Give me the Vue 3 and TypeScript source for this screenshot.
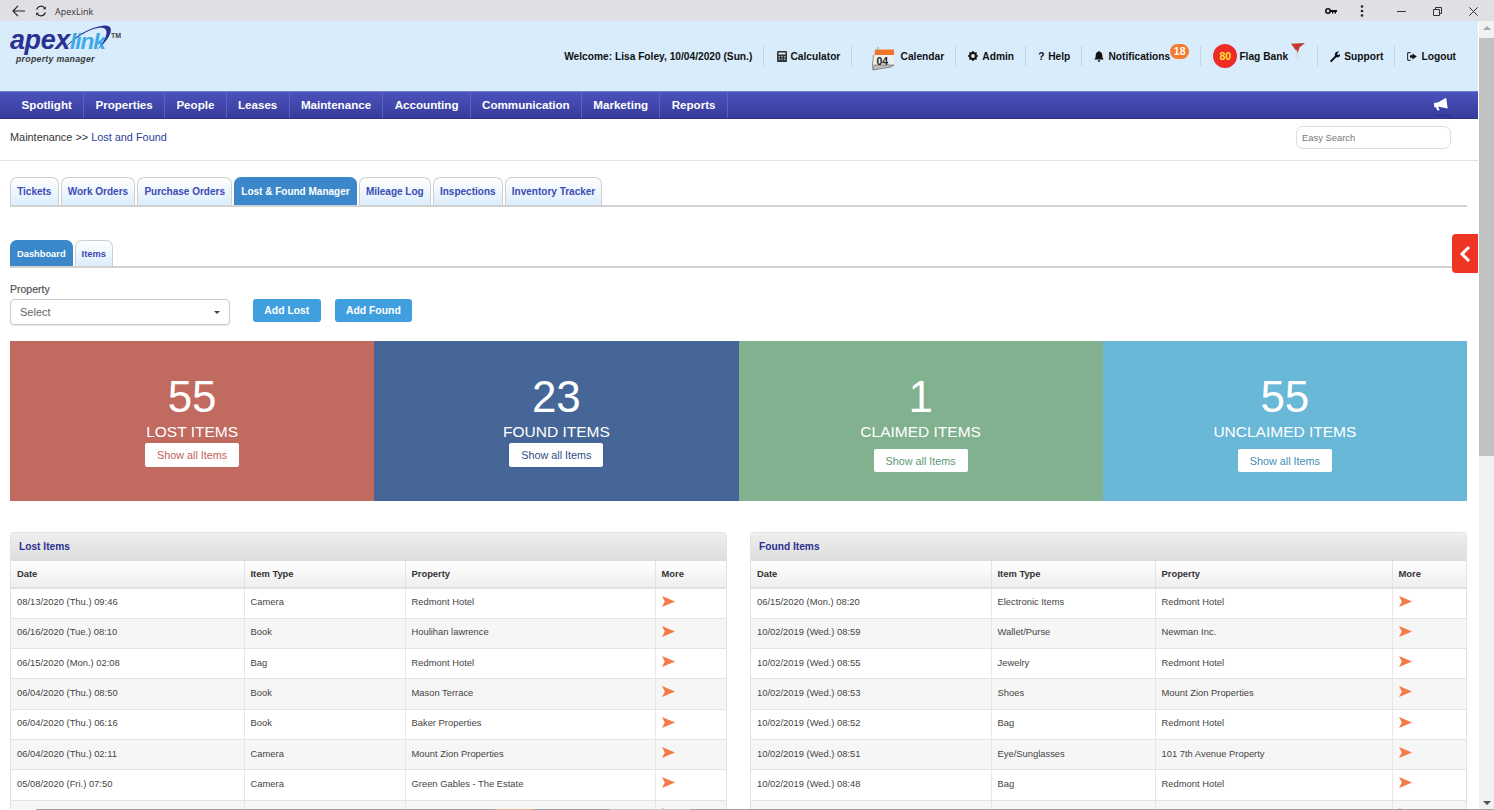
<script setup lang="ts">
interface Row { date: string; type: string; property: string }
const navItems = ['Spotlight', 'Properties', 'People', 'Leases', 'Maintenance', 'Accounting', 'Communication', 'Marketing', 'Reports']
const tabs = ['Tickets', 'Work Orders', 'Purchase Orders', 'Lost & Found Manager', 'Mileage Log', 'Inspections', 'Inventory Tracker']
const stats = [
  { value: '55', label: 'LOST ITEMS', cls: 'lost' },
  { value: '23', label: 'FOUND ITEMS', cls: 'found' },
  { value: '1', label: 'CLAIMED ITEMS', cls: 'claimed' },
  { value: '55', label: 'UNCLAIMED ITEMS', cls: 'unclaimed' },
]
const lostRows: Row[] = [
  { date: '08/13/2020 (Thu.) 09:46', type: 'Camera', property: 'Redmont Hotel' },
  { date: '06/16/2020 (Tue.) 08:10', type: 'Book', property: 'Houlihan lawrence' },
  { date: '06/15/2020 (Mon.) 02:08', type: 'Bag', property: 'Redmont Hotel' },
  { date: '06/04/2020 (Thu.) 08:50', type: 'Book', property: 'Mason Terrace' },
  { date: '06/04/2020 (Thu.) 06:16', type: 'Book', property: 'Baker Properties' },
  { date: '06/04/2020 (Thu.) 02:11', type: 'Camera', property: 'Mount Zion Properties' },
  { date: '05/08/2020 (Fri.) 07:50', type: 'Camera', property: 'Green Gables - The Estate' },
  { date: '', type: '', property: '' },
]
const foundRows: Row[] = [
  { date: '06/15/2020 (Mon.) 08:20', type: 'Electronic Items', property: 'Redmont Hotel' },
  { date: '10/02/2019 (Wed.) 08:59', type: 'Wallet/Purse', property: 'Newman Inc.' },
  { date: '10/02/2019 (Wed.) 08:55', type: 'Jewelry', property: 'Redmont Hotel' },
  { date: '10/02/2019 (Wed.) 08:53', type: 'Shoes', property: 'Mount Zion Properties' },
  { date: '10/02/2019 (Wed.) 08:52', type: 'Bag', property: 'Redmont Hotel' },
  { date: '10/02/2019 (Wed.) 08:51', type: 'Eye/Sunglasses', property: '101 7th Avenue Property' },
  { date: '10/02/2019 (Wed.) 08:48', type: 'Bag', property: 'Redmont Hotel' },
  { date: '', type: '', property: '' },
]
const panels = [
  { title: 'Lost Items', rows: lostRows, cls: 'p-lost' },
  { title: 'Found Items', rows: foundRows, cls: 'p-found' },
]
</script>

<template>
  <div class="window">
    <div class="titlebar">
      <svg class="t-back" width="13" height="12" viewBox="0 0 13 12"><path d="M6 .8 1 6l5 5.200M1 6h12" fill="none" stroke="#222" stroke-width="1.200"/></svg>
      <svg class="t-reload" width="12" height="12" viewBox="0 0 14 14"><path d="M2 5.500A5.200 5.200 0 0 1 11.600 4M12 8.500A5.200 5.200 0 0 1 2.400 10" fill="none" stroke="#222" stroke-width="1.300"/><path d="M12.600 1.600v3.400H9.400zM1.400 12.400V9h3.200z" fill="#222"/></svg>
      <span class="t-title">ApexLink</span>
      <span class="t-spacer"></span>
      <svg class="t-key" width="12" height="8" viewBox="0 0 12 8"><circle cx="3" cy="4" r="2.200" fill="none" stroke="#111" stroke-width="1.600"/><path d="M5 3h7v2h-1v1.400H9.600V5H8.400v1.400H7V5H5z" fill="#111"/></svg>
      <svg class="t-dots" width="4" height="12" viewBox="0 0 4 12"><circle cx="2" cy="1.500" r="1.300" fill="#222"/><circle cx="2" cy="6" r="1.300" fill="#222"/><circle cx="2" cy="10.500" r="1.300" fill="#222"/></svg>
      <svg class="t-min" width="9" height="10" viewBox="0 0 9 10"><path d="M0 5.500h9" stroke="#333"/></svg>
      <svg class="t-max" width="9" height="9" viewBox="0 0 9 9"><path d="M.5 2.500h6v6h-6zM2.500 2.500V.5h6v6H6.500" fill="none" stroke="#333"/></svg>
      <svg class="t-close" width="9" height="9" viewBox="0 0 9 9"><path d="M.3.300l8.400 8.400M8.700.300L.3 8.700" stroke="#333"/></svg>
    </div>

    <div class="viewport">
      <div class="page">
        <header class="header">
          <div class="logo">
            <svg class="swoosh" width="54" height="30" viewBox="0 0 54 30"><path d="M3 26C14 12 30 3 44 1.500c7-.5 8 3.500 6 8.500-2 5-7 11-13 16 5-6 9-12 9.500-17 .5-5-3.500-6-8.500-5C26 6 14 15 3 26z" fill="#28308f"/></svg>
            <span class="l-apex">apex</span><span class="l-link">link</span>
            <span class="l-tm">TM</span>
            <span class="l-sub">property manager</span>
          </div>
          <div class="hitems">
            <div class="hitem"><span>Welcome: Lisa Foley, 10/04/2020 (Sun.)</span></div>
            <div class="hitem">
              <svg width="10" height="11" viewBox="0 0 10 11"><rect width="10" height="11" rx="1" fill="#333"/><rect x="1.500" y="1.500" width="7" height="2" fill="#d8ecfc"/><path d="M1.500 5h1.500v1.200H1.500zM4.200 5h1.500v1.200H4.200zM7 5h1.500v1.200H7zM1.500 7.500h1.500v1.200H1.500zM4.200 7.500h1.500v1.200H4.200zM7 7.500h1.500v1.200H7z" fill="#b8c4cc"/></svg>
              <span>Calculator</span>
            </div>
            <div class="hitem cal">
              <span class="calendar">
                <svg width="23" height="25" viewBox="0 0 23 25"><path d="M3 3.500h19V19H1z" fill="#f4f4f2"/><path d="M3 3.500h19V9H2.400z" fill="#f0742c"/><path d="M2 9h20v11H.8L0 24l2-4z" fill="#eee"/><path d="M0 24 1.500 9M1 24l18-3 3-2H2z" stroke="#777" stroke-width=".8" fill="#bbb"/><path d="M6 1v4" stroke="#999"/></svg>
                <b>04</b>
              </span>
              <span>Calendar</span>
            </div>
            <div class="hitem">
              <svg width="10" height="10" viewBox="0 0 10 10"><circle cx="5" cy="5" r="2.900" fill="none" stroke="#111" stroke-width="2"/><path d="M5 0v10M0 5h10M1.500 1.500l7 7M8.500 1.500l-7 7" stroke="#111" stroke-width="1.500" stroke-dasharray="1.700 6.600 1.700"/></svg>
              <span>Admin</span>
            </div>
            <div class="hitem"><span class="q">?</span><span>Help</span></div>
            <div class="hitem notif">
              <svg width="10" height="11" viewBox="0 0 10 11"><path d="M5 0c.5 0 .8.300.8.800C7.500 1.200 8.300 2.600 8.300 4.500c0 2 .5 3 1.500 4H.2c1-1 1.500-2 1.500-4 0-1.900.8-3.300 2.500-3.700C4.200.3 4.500 0 5 0zM3.700 9.300h2.600C6.200 10.300 5.700 11 5 11s-1.200-.7-1.300-1.700z" fill="#111"/></svg>
              <span>Notifications</span><span class="badge">18</span>
            </div>
            <div class="hitem flag">
              <span class="count">80</span><span>Flag Bank</span>
              <svg class="flagicon" width="15" height="17" viewBox="0 0 15 17"><path d="M0 .8 14 0 8.500 4.500 6.800 10z" fill="#c53a2c"/><path d="M5.500 7 7 16.500" stroke="#d4d4cc" stroke-width="1" fill="none"/></svg>
            </div>
            <div class="hitem">
              <svg width="10" height="11" viewBox="0 0 10 11"><path d="M.4 9.500 5 4.800C4.600 3.300 5 1.900 6.200 1 7.100.4 8.200.2 9.200.6L7.300 2.500l.3 1.300 1.300.3L10.600 2.300c.3 1 0 2.100-.7 3-.9 1-2.300 1.400-3.600 1L1.700 11c-.5.3-1 .2-1.300-.2-.3-.4-.3-.9 0-1.300z" fill="#111"/></svg>
              <span>Support</span>
            </div>
            <div class="hitem last">
              <svg width="10" height="9" viewBox="0 0 10 9"><path d="M3.500.6H1.500C1 .6.600 1 .6 1.500v6c0 .5.400.9.900.9h2" fill="none" stroke="#333" stroke-width="1.100"/><path d="M5.500 1.500 9.800 4.500 5.500 7.500V5.800H3V3.200h2.500z" fill="#111"/></svg>
              <span>Logout</span>
            </div>
          </div>
        </header>

        <nav class="nav">
          <a v-for="n in navItems" :key="n" class="nav-item">{{ n }}</a>
          <span class="nav-spacer"></span>
          <span class="announce">
            <svg width="15" height="13" viewBox="0 0 15 13"><path d="M0 4h4.500L13 .5v11L4.500 8.500H3.800l1 3.500H2.500l-1-3.500H0z" fill="#fff" transform="rotate(-8 7 6)"/></svg>
          </span>
        </nav>

        <div class="crumbs">
          <div class="crumb">Maintenance &gt;&gt; <a>Lost and Found</a></div>
          <div class="search">Easy Search</div>
        </div>

        <main class="content">
          <div class="tabs">
            <a v-for="t in tabs" :key="t" class="tab" :class="{ active: t === 'Lost & Found Manager' }">{{ t }}</a>
          </div>
          <div class="tabs sub">
            <a class="tab active">Dashboard</a>
            <a class="tab">Items</a>
          </div>

          <div class="filters">
            <div class="field">
              <label>Property</label>
              <div class="select"><span>Select</span><i class="caret"></i></div>
            </div>
            <button class="btn">Add Lost</button>
            <button class="btn">Add Found</button>
          </div>

          <div class="stats">
            <div v-for="s in stats" :key="s.cls" class="stat" :class="s.cls">
              <div class="num">{{ s.value }}</div>
              <div class="lab">{{ s.label }}</div>
              <button class="show">Show all Items</button>
            </div>
          </div>

          <div class="panels">
            <section v-for="p in panels" :key="p.title" class="panel" :class="p.cls">
              <h3>{{ p.title }}</h3>
              <table>
                <colgroup><col class="c1"><col class="c2"><col class="c3"><col class="c4"></colgroup>
                <thead><tr><th>Date</th><th>Item Type</th><th>Property</th><th>More</th></tr></thead>
                <tbody>
                  <tr v-for="(r, i) in p.rows" :key="i">
                    <td>{{ r.date }}</td><td>{{ r.type }}</td><td>{{ r.property }}</td>
                    <td class="more"><svg width="13" height="11" viewBox="0 0 13 11"><path d="M0 0 13 5.500 0 11 2.800 5.500z" fill="#f47a48"/></svg></td>
                  </tr>
                </tbody>
              </table>
            </section>
          </div>
        </main>

        <div class="feedback">
          <svg width="12" height="18" viewBox="0 0 12 18"><path d="M10 2 3 9l7 7" fill="none" stroke="#fff" stroke-width="3"/></svg>
        </div>
      </div>

      <div class="scrollbar">
        <i class="arr up"></i>
        <div class="thumb"></div>
        <i class="arr down"></i>
      </div>
    </div>
    <div class="edge"></div>
  </div>
</template>

<style>
html, body { margin: 0; overflow: hidden; }
</style>

<style scoped>
.window { width: 1494px; height: 810px; display: flex; flex-direction: column; overflow: hidden; font-family: "Liberation Sans", Arial, sans-serif; background: #fff; }
.titlebar { height: 21px; flex: none; background: #dfe0e4; display: flex; align-items: center; box-sizing: border-box; padding-top: 1px; }
.t-back { margin-left: 12px; }
.t-reload { margin-left: 10px; }
.t-title { margin-left: 8px; font: 9px "Open Sans", sans-serif; color: #333; }
.t-spacer { flex: 1; }
.t-key { margin-right: 23px; }
.t-dots { margin-right: 33px; }
.t-min { margin-right: 27px; }
.t-max { margin-right: 27px; }
.t-close { margin-right: 16px; }

.viewport { flex: 1; min-height: 0; display: flex; }
.page { flex: 1; min-width: 0; position: relative; overflow: hidden; }
.scrollbar { width: 15px; margin-left: 1px; flex: none; background: #f1f1f1; display: flex; flex-direction: column; align-items: center; }
.thumb { width: 100%; height: 418px; background: #c1c1c1; margin-top: 8px; }
.arr { width: 0; height: 0; border-left: 4px solid transparent; border-right: 4px solid transparent; }
.arr.up { border-bottom: 4px solid #a8a8a8; margin-top: 5px; }
.arr.down { border-top: 4px solid #505050; margin-top: auto; margin-bottom: 4px; }
.edge { height: 1px; flex: none; background: linear-gradient(90deg, #fff 36px, #a5a5a5 36px 495px, #e8b48c 495px 532px, #a5a5a5 532px 610px, #c8c8c8 610px 690px, #a5a5a5 690px); }

.header { height: 70px; background: #d8ecfc; display: flex; align-items: flex-start; justify-content: space-between; padding-right: 22px; }
.logo { position: relative; width: 112px; height: 44px; margin: 3px 0 0 10px; font-style: italic; font-weight: 700; line-height: 1; }
.swoosh { position: absolute; left: 50px; top: 0; }
.l-apex { position: absolute; left: 0; top: 3px; font-size: 27px; letter-spacing: -.4px; color: #2a3191; }
.l-link { position: absolute; left: 60px; top: 7px; font-size: 22.500px; letter-spacing: -1px; color: #3fa9e8; }
.l-tm { position: absolute; left: 101px; top: 8px; font-size: 7px; color: #444; font-style: normal; }
.l-sub { position: absolute; left: 6px; top: 31px; font-size: 8.800px; line-height: 9px; color: #3a3a3a; letter-spacing: .25px; }
.hitems { display: flex; align-items: center; height: 20px; margin-top: 25px; font-size: 10.200px; font-weight: 700; color: #111; }
.hitem { display: flex; align-items: center; gap: 4px; height: 100%; padding-right: 11px; margin-right: 12.200px; border-right: 1px solid #c4d3de; white-space: nowrap; }
.hitem.last { border: 0; padding: 0; margin: 0; }
.cal { gap: 6px; padding-left: 8px; }
.calendar { position: relative; width: 23px; height: 25px; margin-left: -1px; margin-top: 4px; }
.calendar b { position: absolute; left: 5px; top: 9.500px; font-size: 10.500px; color: #222; }
.calendar svg { display: block; }
.q { width: 6px; }
.notif { gap: 4px; }
.badge { position: relative; top: -5px; margin-left: -4px; width: 19px; height: 15px; border-radius: 8px; background: #f47a2c; color: #fff; font-size: 10.500px; text-align: center; line-height: 15px; }
.flag { gap: 2px; }
.count { width: 24px; height: 24px; border-radius: 50%; background: #ee2b24; color: #ffe93b; font-size: 10.500px; text-align: center; line-height: 24px; }
.flagicon { margin: -10px 0 0 1px; }

.nav { height: 28px; box-sizing: border-box; display: flex; padding-left: 10.300px; background: linear-gradient(#4c52bc, #363b9b); border-top: 1px solid #6d7bd4; border-bottom: 1px solid #2e3389; }
.nav-item { padding: 0 11.300px; line-height: 26px; font-size: 11.600px; font-weight: 700; color: #fff; border-right: 1px solid #5a60c4; }
.nav-spacer { flex: 1; }
.announce { margin: 4px 27px 0 0; width: 17px; height: 19px; border-bottom: 1px solid #2a2f86; }
.announce svg { display: block; margin-top: 2px; }

.crumbs { height: 42px; box-sizing: border-box; border-bottom: 1px solid #e2e2e2; display: flex; align-items: center; justify-content: space-between; padding: 0 27px 5px 10px; }
.crumb { font-size: 10.900px; color: #333; }
.crumb a { color: #2c3e9a; }
.search { width: 155px; height: 23px; box-sizing: border-box; border: 1px solid #ddd; border-radius: 7px; padding-left: 5px; font-size: 9.400px; line-height: 21px; color: #777; background: #fff; }

.content { padding: 16px 11px 0 10px; }
.tabs { display: flex; gap: 2px; border-bottom: 2px solid #d2d2d2; height: 28px; }
.tab { box-sizing: border-box; height: 28px; padding: 0 6.150px; border: 1px solid #cfcfcf; border-bottom: 0; border-radius: 7px 7px 0 0; background: linear-gradient(#fff, #dcedfc); color: #3b4ab5; font-size: 10px; font-weight: 700; line-height: 28px; white-space: nowrap; }
.tab.active { background: #3a88c9; border-color: #3a88c9; color: #fff; }
.sub { margin-top: 33px; height: 26px; }
.sub .tab { height: 26px; line-height: 27px; font-size: 9.300px; padding: 0 6px; }

.filters { display: flex; align-items: flex-start; margin-top: 15px; height: 58px; }
.field { width: 220px; margin-right: 23px; }
.field label { display: block; font-size: 10.500px; color: #555; line-height: 12px; margin-bottom: 4px; -webkit-text-stroke: .2px #555; }
.select { box-sizing: border-box; height: 26px; border: 1px solid #ccc; border-radius: 4px; padding: 0 9px; display: flex; align-items: center; justify-content: space-between; font-size: 11px; color: #666; box-shadow: 0 1px 1px #e6e6e6; }
.caret { width: 0; height: 0; border-left: 3px solid transparent; border-right: 3px solid transparent; border-top: 3px solid #444; }
.btn { height: 23px; margin-top: 16px; margin-right: 14px; padding: 0 11.300px; border: 0; border-radius: 3px; background: #3f9fdf; color: #fff; font: 700 10.400px "Liberation Sans", Arial, sans-serif; }

.stats { display: grid; grid-template-columns: repeat(4, 1fr); height: 160px; }
.stat { display: flex; flex-direction: column; align-items: center; color: #fff; padding-top: 30px; box-sizing: border-box; }
.num { font-size: 44px; line-height: 52px; }
.lab { font-size: 15.500px; line-height: 18px; }
.show { margin-top: 2px; width: 94px; height: 24px; border: 0; border-radius: 2px; background: #fff; font: 10.800px "Liberation Sans", Arial, sans-serif; padding: 0; }
.claimed .show, .unclaimed .show { margin-top: 8px; height: 23px; }
.lost { background: #c16a60; } .lost .show { color: #bf6257; }
.found { background: #466698; } .found .show { color: #2d4f85; }
.claimed { background: #81b18e; } .claimed .show { color: #5d9a6f; }
.unclaimed { background: #69b8d8; } .unclaimed .show { color: #3f8fb4; }

.panels { display: flex; justify-content: space-between; margin-top: 31px; }
.panel { border: 1px solid #e2e2e2; border-bottom: 0; border-radius: 4px 4px 0 0; box-sizing: border-box; width: 717px; }
.panel h3 { margin: 0; height: 28px; box-sizing: border-box; padding-left: 8px; line-height: 27px; font-size: 10.200px; font-weight: 700; color: #2c318f; background: linear-gradient(#efefef, #dcdcdc); border-radius: 4px 4px 0 0; }
table { width: 100%; border-collapse: collapse; table-layout: fixed; font-size: 9.400px; color: #444; }
th { height: 27px; padding: 0 0 2px 6px; box-sizing: border-box; text-align: left; font-weight: 700; color: #333; background: linear-gradient(#fff, #eee); border-right: 1px solid #e4e4e4; border-bottom: 2px solid #e0e0e0; }
td { height: 30.330px; box-sizing: border-box; padding: 0 0 3px 6px; border-right: 1px solid #e8e8e8; border-bottom: 1px solid #e4e4e4; white-space: nowrap; }
th:last-child, td:last-child { border-right: 0; }
tbody tr:nth-child(even) td { background: #f6f6f6; }
td.more { vertical-align: top; padding-top: 7px; }
td.more svg { display: block; }
.p-lost .c1 { width: 233px; } .p-lost .c2 { width: 161px; } .p-lost .c3 { width: 250px; }
.p-found .c1 { width: 240px; } .p-found .c2 { width: 164px; } .p-found .c3 { width: 237px; }

.feedback { position: absolute; right: 0; top: 213px; width: 26px; height: 39px; background: #ee3524; border-radius: 4px 0 0 4px; display: flex; align-items: center; justify-content: center; }
</style>
